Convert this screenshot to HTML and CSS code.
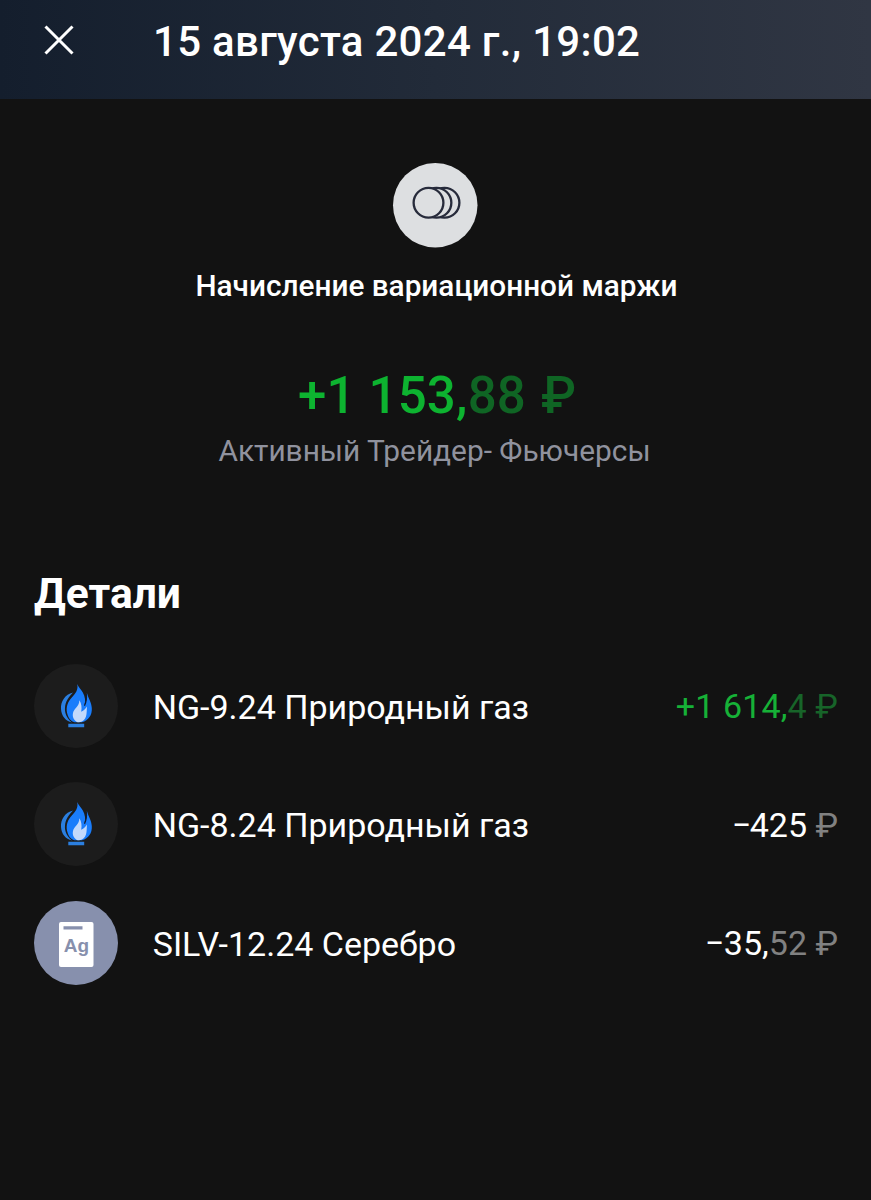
FILE: index.html
```
<!DOCTYPE html>
<html lang="ru">
<head>
<meta charset="utf-8">
<title>Начисление вариационной маржи</title>
<link rel="stylesheet" href="styles.css">
</head>
<body>
<svg class="defs" width="0" height="0" aria-hidden="true">
  <symbol id="gas" viewBox="0 0 84 84">
    <path fill="#2b7fe0" d="M39 28.500C31 30.500 26.500 37.500 27 45C27.400 52 31.500 57 38 58.500C33 54.500 30.500 49.500 31 43.500C31.500 37.500 34.500 33 39 28.500Z"/>
    <path fill="#1a7dfb" d="M43.200 20C44.500 26 41.500 29.500 37.800 33.500C33.500 38 32 43 33 48.500C34 53.500 36.500 57.300 40.500 58.300L48 58.300C54.500 56.500 58.300 51 57.800 44C57.500 38.500 54.500 34.500 52.900 29C52.900 32.500 52.700 36.500 50.600 41.500C51.800 36.500 51 32.500 48.800 28.500C47 25.300 44.500 23.500 43.200 20Z"/>
    <path fill="none" stroke="#111c30" stroke-width="1.200" d="M52.400 30C52.900 34.500 52.300 38 50.500 41.800"/>
    <path fill="#c3d9fb" d="M45.300 36.200C45.500 40 43.500 42.200 41 45C38 48.500 38 53.500 41 56.500C42 57.800 43.500 58.300 45 58.300C48.500 58 51 55.500 52 52.500C52.900 49.500 52.700 46 53 42.500C51.700 44.500 49.800 46.500 47.200 47.800C48 43.500 47.600 39.500 45.300 36.200Z"/>
    <path fill="#2b7fe0" d="M34.300 59.800H50.200V63.200H34.300Z"/>
  </symbol>
</svg>
<header class="header">
  <svg class="close" viewBox="0 0 32 32"><path d="M2.500 2.500L29.500 29.500M29.500 2.500L2.500 29.500"/></svg>
  <h1 class="title">15 августа 2024 г., 19:02</h1>
</header>
<main class="main">
  <section class="summary">
    <svg class="badge" viewBox="0 0 84 84">
      <circle cx="42" cy="42" r="42" fill="#dddfe1"/>
      <g fill="#dddfe1" stroke="#272b3b" stroke-width="2.300">
        <circle cx="51.200" cy="39.500" r="14.800"/>
        <circle cx="43.200" cy="39.500" r="14.800"/>
        <circle cx="35.300" cy="39.500" r="14.800"/>
      </g>
    </svg>
    <h2 class="operation">Начисление вариационной маржи</h2>
    <p class="total">+1 153,<span class="dim">88 <span class="currency">₽</span></span></p>
    <p class="account">Активный Трейдер- Фьючерсы</p>
  </section>
  <h2 class="section-title">Детали</h2>
  <ul class="list">
    <li class="row">
      <svg class="icon icon-gas"><use href="#gas"/></svg>
      <span class="name">NG-9.24 Природный газ</span>
      <span class="amount gain">+1 614,<span class="dim">4 ₽</span></span>
    </li>
    <li class="row">
      <svg class="icon icon-gas"><use href="#gas"/></svg>
      <span class="name">NG-8.24 Природный газ</span>
      <span class="amount"><span class="minus">−</span>425<span class="dim"> ₽</span></span>
    </li>
    <li class="row">
      <svg class="icon icon-silver" viewBox="0 0 84 84">
        <rect x="25" y="21" width="34.500" height="45" rx="2" fill="#fff"/>
        <path fill="#8790ad" d="M29.500 25.200H48.500V28.500H29.500Z"/>
        <text class="symbol" x="42.500" y="51">Ag</text>
      </svg>
      <span class="name">SILV-12.24 Серебро</span>
      <span class="amount"><span class="minus minus-wide">−</span>35,<span class="dim">52 ₽</span></span>
    </li>
  </ul>
</main>
</body>
</html>
```
FILE: styles.css
```
* { box-sizing: border-box; margin: 0; padding: 0; }
body {
  min-height: 1200px;
  background: #121212;
  color: #fff;
  font-family: Roboto, "Liberation Sans", sans-serif;
}
.defs { display: block; height: 0; }
.header {
  display: flex;
  align-items: flex-start;
  gap: 78px;
  height: 98.500px;
  padding: 17px 43px 0;
  background: linear-gradient(90deg, #141e2d, #222b39 50%, #303643);
}
.close { width: 32px; height: 32px; margin-top: 7px; fill: none; stroke: #fff; stroke-width: 3; }
.title { font-size: 42px; line-height: 50px; font-weight: 500; letter-spacing: 0.3px; white-space: pre; }
.main { padding: 64px 34px 0; }
.summary { display: flex; flex-direction: column; align-items: center; text-align: center; }
.badge { width: 84.500px; height: 84.500px; margin-right: 1px; overflow: visible; }
.operation { margin: 18.500px 0 0 2px; font-size: 29.750px; line-height: 40px; font-weight: 500; }
.total { margin: 60px 0 0 3px; font-size: 51px; line-height: 60px; font-weight: 500; letter-spacing: 0.200px; color: #0db330; }
.total .dim { color: #0f6524; }
.total .currency { margin-left: 2px; }
.account { margin: 5px 2px 0 0; font-size: 29.850px; line-height: 40px; color: #90929e; }
.section-title { margin-top: 97px; font-size: 42.600px; line-height: 50px; font-weight: 700; }
.list { display: grid; gap: 34.500px; margin-top: 46px; list-style: none; }
.row { display: flex; align-items: center; height: 84px; }
.icon { width: 84px; height: 84px; border-radius: 50%; }
.icon-gas { background: #1c1c1c; }
.icon-silver { background: #8790ad; }
.symbol { font: 700 19px "Liberation Sans", sans-serif; text-anchor: middle; fill: #8790ad; }
.name { flex: 1; margin: 2px 0 0 34.700px; font-size: 34px; line-height: 40px; }
.amount { font-size: 34px; line-height: 40px; margin: 1px -1px 0 0; white-space: pre; }
.amount .dim { color: #818181; }
.minus { letter-spacing: -1.500px; }
.minus-wide { letter-spacing: -0.300px; }
.gain { color: #16b137; letter-spacing: 0.120px; }
.gain .dim { color: #176429; }
```
